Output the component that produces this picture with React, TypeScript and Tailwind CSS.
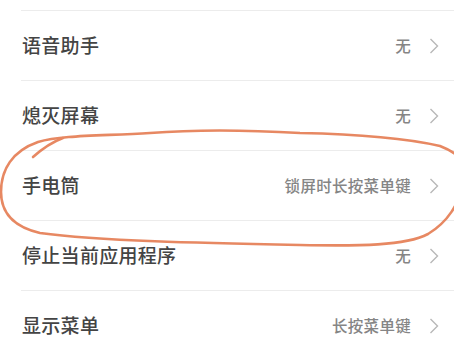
import React from "react";

const rows = [
  { title: "语音助手", value: "无" },
  { title: "熄灭屏幕", value: "无" },
  { title: "手电筒", value: "锁屏时长按菜单键" },
  { title: "停止当前应用程序", value: "无" },
  { title: "显示菜单", value: "长按菜单键" },
];

function Chevron() {
  return (
    <svg width="10" height="16" viewBox="0 0 10 16" className="shrink-0">
      <path d="M1.5 1 L8.5 8 L1.5 15" fill="none" stroke="#b8b8b8" strokeWidth="1.4" />
    </svg>
  );
}

export default function App() {
  return (
    <div
      className="relative w-[454px] h-[360px] overflow-hidden bg-white"
      style={{ fontFamily: '"Noto Sans CJK SC", "Noto Sans", sans-serif' }}
    >
      <div className="h-[10px]" />
      {rows.map((r) => (
        <div key={r.title} className="ml-[21px] h-[70px] border-t border-[#ececec] flex items-center pr-[15px]">
          <span className="flex-1 pl-px text-[19px] font-medium text-[#444444] tracking-[0.3px]">{r.title}</span>
          <span className="text-[15.5px] font-medium text-[#858585] mr-[18px] tracking-[0.3px]">{r.value}</span>
          <Chevron />
        </div>
      ))}
      <svg
        className="absolute inset-0 pointer-events-none"
        width="454"
        height="360"
        viewBox="0 0 454 360"
      >
        <g fill="none" stroke="#e57c52" strokeWidth="2.6" strokeLinecap="round" strokeLinejoin="round" opacity="0.9">
          <path d="M33 157 C42 149, 52 142, 63 138" />
          <path d="M300 133 C250 130, 200 129, 150 133 C100 136, 62 135, 38 142 C12 151, 1 170, 1 192 C1 214, 14 227, 40 233 C100 241, 200 243, 300 245 C360 246, 405 246, 428 234 C448 222, 458 205, 466 180 C468 162, 458 153, 440 146 C405 138, 350 134, 300 133 Z" />
        </g>
      </svg>
    </div>
  );
}
